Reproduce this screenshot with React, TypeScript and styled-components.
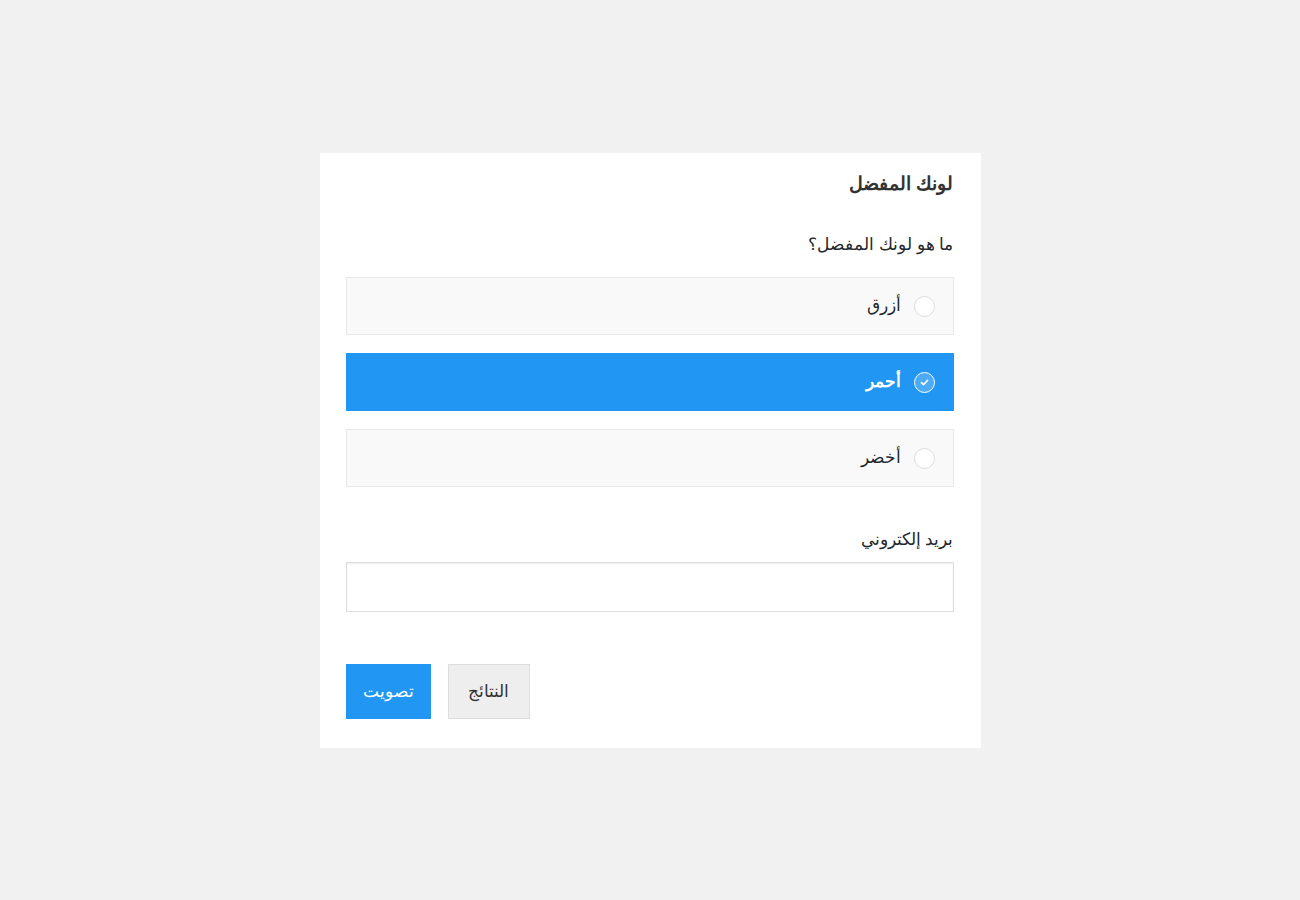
import React, { useState } from "react";
import styled, { createGlobalStyle } from "styled-components";

const Global = createGlobalStyle`
  html, body { margin: 0; padding: 0; background: #f1f1f1; }
  body { font-family: "Liberation Sans", Arial, sans-serif; }
`;

const Page = styled.div`
  width: 1300px;
  height: 900px;
  display: flex;
  justify-content: center;
  align-items: flex-start;
  padding-top: 153px;
  box-sizing: border-box;
`;

const Card = styled.form`
  direction: rtl;
  width: 661px;
  box-sizing: border-box;
  background: #fff;
  padding: 18px 27px 29px 26px;
  display: flex;
  flex-direction: column;
`;

const Title = styled.h2`
  margin: 0;
  font-size: 19px;
  font-weight: bold;
  color: #333;
  line-height: 26px;
`;

const Question = styled.div`
  margin-top: 36px;
  font-size: 17px;
  color: #23282d;
  line-height: 24px;
`;

const Options = styled.div`
  margin-top: 20px;
  display: flex;
  flex-direction: column;
  gap: 18px;
`;

const Option = styled.label<{ $active: boolean }>`
  display: flex;
  align-items: center;
  gap: 13px;
  height: 58px;
  box-sizing: border-box;
  padding: 0 18px;
  cursor: pointer;
  border: 1px solid ${(p) => (p.$active ? "#2196f3" : "#e8e8e8")};
  background: ${(p) => (p.$active ? "#2196f3" : "#f9f9f9")};
  color: ${(p) => (p.$active ? "#fff" : "#23282d")};
  font-weight: ${(p) => (p.$active ? "bold" : "normal")};
  font-size: 17px;
  line-height: 24px;
`;

const Radio = styled.span<{ $active: boolean }>`
  width: 21px;
  height: 21px;
  box-sizing: border-box;
  border-radius: 50%;
  border: ${(p) => (p.$active ? "1.5px solid #fff" : "1px solid #ddd")};
  background: ${(p) => (p.$active ? "rgba(255,255,255,0.2)" : "#fff")};
  display: flex;
  align-items: center;
  justify-content: center;
  flex: none;
`;

const FieldLabel = styled.div`
  margin-top: 41px;
  font-size: 17px;
  color: #23282d;
  line-height: 24px;
`;

const Input = styled.input`
  margin-top: 10px;
  height: 50px;
  box-sizing: border-box;
  border: 1px solid #ddd;
  box-shadow: inset 0 1px 2px rgba(0, 0, 0, 0.07);
  background: #fff;
  width: 100%;
  font-size: 16px;
  padding: 0 12px;
  outline: none;
`;

const Buttons = styled.div`
  direction: ltr;
  margin-top: 52px;
  display: flex;
  justify-content: flex-start;
  gap: 17px;
`;

const Button = styled.button<{ $primary?: boolean }>`
  height: 55px;
  box-sizing: border-box;
  padding: 0 ${(p) => (p.$primary ? "16px" : "19.5px")};
  font-family: inherit;
  font-size: 17px;
  font-weight: normal;
  border: 1px solid ${(p) => (p.$primary ? "#2196f3" : "#ddd")};
  background: ${(p) => (p.$primary ? "#2196f3" : "#eee")};
  color: ${(p) => (p.$primary ? "#fff" : "#333")};
  cursor: pointer;
`;

const options = ["أزرق", "أحمر", "أخضر"];

export default function App() {
  const [sel, setSel] = useState(1);
  return (
    <>
      <Global />
      <Page>
        <Card onSubmit={(e) => e.preventDefault()}>
          <Title>لونك المفضل</Title>
          <Question>ما هو لونك المفضل؟</Question>
          <Options>
            {options.map((o, i) => (
              <Option key={o} $active={sel === i} onClick={() => setSel(i)}>
                <Radio $active={sel === i}>
                  {sel === i && (
                    <svg width="11" height="11" viewBox="0 0 11 11">
                      <path d="M2.4 5.7 L4.5 7.6 L8.6 3.4" fill="none" stroke="#fff" strokeWidth="1.6" strokeLinecap="round" strokeLinejoin="round" />
                    </svg>
                  )}
                </Radio>
                <span>{o}</span>
              </Option>
            ))}
          </Options>
          <FieldLabel>بريد إلكتروني</FieldLabel>
          <Input type="email" />
          <Buttons>
            <Button $primary type="submit">تصويت</Button>
            <Button type="button">النتائج</Button>
          </Buttons>
        </Card>
      </Page>
    </>
  );
}
